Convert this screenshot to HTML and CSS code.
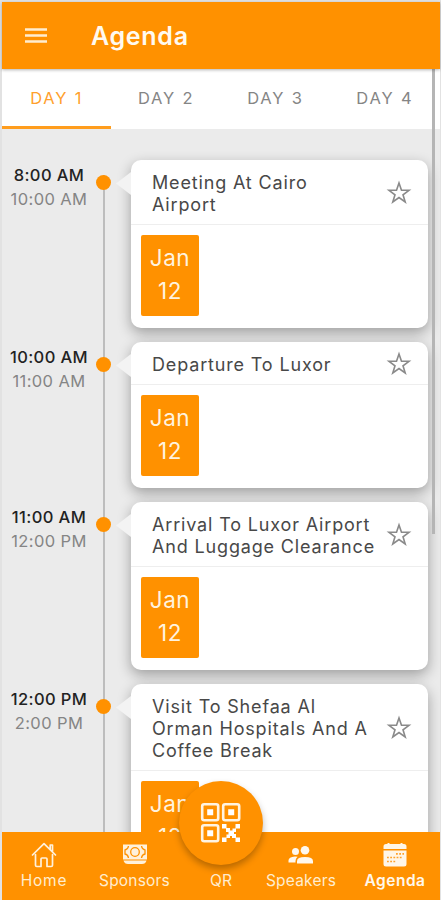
FILE: index.html
```html
<!DOCTYPE html>
<html lang="en">
<head>
<meta charset="utf-8">
<title>Agenda</title>
<link rel="stylesheet" href="styles.css">
</head>
<body>
<svg width="0" height="0" class="defs">
  <symbol id="star" viewBox="0 0 24 24"><path d="M12 2.800 14.300 9.500h6.900l-5.500 4.100 2 6.600L12 16.200l-5.700 4 2-6.600L2.800 9.500h6.900z" fill="none" stroke="#8a8a8a" stroke-width="1.500"/></symbol>
</svg>
<div class="app">
  <header class="bar">
    <svg class="menu" width="24" height="18" viewBox="0 0 24 18"><path d="M1 2.500h22M1 8.500h22M1 14.500h22" stroke="#ffedcf" stroke-width="2.600"/></svg>
    <h1>Agenda</h1>
  </header>
  <nav class="tabs">
    <a class="tab active">DAY 1</a><a class="tab">DAY 2</a><a class="tab">DAY 3</a><a class="tab">DAY 4</a>
  </nav>
  <main class="list">
    <section class="row">
      <div class="times"><b>8:00 AM</b><span>10:00 AM</span></div>
      <div class="rail"><i class="dot"></i></div>
      <article class="card">
        <div class="head"><h2>Meeting At Cairo<br>Airport</h2><svg class="star"><use href="#star"/></svg></div>
        <div class="body"><div class="date"><span>Jan</span><span>12</span></div></div>
      </article>
    </section>
    <section class="row">
      <div class="times"><b>10:00 AM</b><span>11:00 AM</span></div>
      <div class="rail"><i class="dot"></i></div>
      <article class="card">
        <div class="head"><h2>Departure To Luxor</h2><svg class="star"><use href="#star"/></svg></div>
        <div class="body"><div class="date"><span>Jan</span><span>12</span></div></div>
      </article>
    </section>
    <section class="row">
      <div class="times"><b>11:00 AM</b><span>12:00 PM</span></div>
      <div class="rail"><i class="dot"></i></div>
      <article class="card">
        <div class="head"><h2>Arrival To Luxor Airport<br>And Luggage Clearance</h2><svg class="star"><use href="#star"/></svg></div>
        <div class="body"><div class="date"><span>Jan</span><span>12</span></div></div>
      </article>
    </section>
    <section class="row">
      <div class="times"><b>12:00 PM</b><span>2:00 PM</span></div>
      <div class="rail"><i class="dot"></i></div>
      <article class="card">
        <div class="head"><h2>Visit To Shefaa Al<br>Orman Hospitals And A<br>Coffee Break</h2><svg class="star"><use href="#star"/></svg></div>
        <div class="body"><div class="date"><span>Jan</span><span>12</span></div></div>
      </article>
    </section>
  </main>
  <div class="scroll"></div>
  <nav class="bottom">
    <a class="item home"><svg width="26" height="26" viewBox="0 0 26 26" fill="none" stroke="#fff1dc" stroke-width="1.700" stroke-linejoin="round" stroke-linecap="round"><path d="M4.500 12.500V23.200q0 1.300 1.300 1.300h4.200v-7.500q0-1 1-1h4q1 0 1 1v7.500h4.200q1.300 0 1.300-1.300V12.500M1.500 13 13 1.600 24.500 13M19.200 7.500V3h2.300v6.800"/></svg><span>Home</span></a>
    <a class="item sponsors"><svg width="26" height="26" viewBox="0 0 26 26"><path d="M1 2.500h24v15H1z" fill="#fff1dc"/><path d="M1.500 18.500q1 3.500 4.500 3.500h14q3.500 0 4.500-3.500z" fill="#fff1dc"/><g fill="none" stroke="#ff9100" stroke-width="1.300"><circle cx="13" cy="10" r="4.300"/><path d="M6.500 4Q6 7.500 3 8v4q3 .5 3.500 4M19.500 4q.5 3.500 3.500 4v4q-3 .5-3.500 4"/></g></svg><span>Sponsors</span></a>
    <a class="item qr"><span>QR</span></a>
    <a class="item speakers"><svg width="26" height="26" viewBox="0 0 26 26" fill="#fff8ee"><circle cx="7.500" cy="9.500" r="3.500"/><circle cx="17" cy="8.200" r="4.300"/><path d="M.5 20.500v-2q0-3.500 6.500-4 1.500 0 2.500.3Q7.500 16.500 7.500 19v1.500zM9 21.500v-2.300q0-4.200 8-4.200t8 4.200v2.300z"/></svg><span>Speakers</span></a>
    <a class="item agenda"><svg width="26" height="26" viewBox="0 0 26 26"><path d="M5.500 2V1h2v1h11V1h2v1H22q2.500 0 2.500 2.500V7h-23V4.500Q1.500 2 4 2zM1.500 8.500h23V22q0 2.500-2.500 2.500H4Q1.500 24.500 1.500 22z" fill="#fff6e8"/><path d="M14 11.800h1.800m1.400 0H19m1.400 0H22M5 15.500h1.800m1.400 0H10m1.400 0h1.800m1.400 0h1.800m1.400 0h1.800M5 19.500h1.800m1.400 0H10m1.400 0h1.800" stroke="#ffa22b" stroke-width="1.700"/></svg><span>Agenda</span></a>
  </nav>
  <a class="fab"><svg width="42" height="42" viewBox="0 0 42 42"><g fill="none" stroke="#fff4e2" stroke-width="2.600"><rect x="2.200" y="2.200" width="16" height="16" rx="2"/><rect x="23.200" y="2.200" width="16" height="16" rx="2"/><rect x="2.200" y="23.200" width="16" height="16" rx="2"/></g><path d="M7.200 7.200h6v6h-6zM28.200 7.200h6v6h-6zM7.200 28.200h6v6h-6zM22 22h4.500v4.500H22zM35.500 22H40v4.500h-4.500zM28.500 28.500h5.500V34h-5.500zM26 26h4v4h-4zM32.500 26.500h3.500V30h-3.500zM26.500 32.500H30V36h-3.500zM32 32h4v4h-4zM22 35.500h4.500V40H22zM35.500 35.500H40V40h-4.500z" fill="#fff"/></svg></a>
</div>
</body>
</html>
```
FILE: styles.css
```css
* { box-sizing: border-box; }
body { margin: 0; background: #e2e2e2; font-family: Inter, "Liberation Sans", sans-serif; overflow: hidden; }
.defs { position: absolute; }
.app { position: relative; display: flex; flex-direction: column; height: 900px; padding: 2px 1px 0 2px; overflow: hidden; }
.bar { flex: none; height: 67px; background: #ff9100; display: flex; align-items: center; padding-left: 22px; box-shadow: 0 1px 3px rgba(0,0,0,.3); z-index: 2; }
.bar h1 { margin: 0 0 0 43px; font-size: 25px; font-weight: 600; line-height: 30px; color: #fffaf0; letter-spacing: .7px; }
.tabs { flex: none; display: flex; height: 60px; background: #fff; }
.tab { width: 109.400px; text-align: center; font-size: 16.500px; line-height: 58px; color: #858585; letter-spacing: 1.800px; border-bottom: 3px solid transparent; }
.tab.active { color: #ffa02c; border-bottom-color: #ff9d1d; }
.list { flex: 1; min-height: 0; overflow: hidden; background: #ebebeb; padding-top: 31px; }
.row { display: flex; padding-bottom: 14px; }
.times { width: 94px; padding-top: 3px; display: flex; flex-direction: column; align-items: center; font-size: 16.500px; line-height: 24px; color: #858585; letter-spacing: .4px; }
.times b { color: #222; font-weight: 500; }
.rail { width: 16px; margin-bottom: -36px; margin-top: 15px; background: linear-gradient(#bdbdbd, #bdbdbd) center top / 2px 100% no-repeat; }
.dot { display: block; width: 15px; height: 15px; border-radius: 50%; background: #ff9100; }
.card { position: relative; width: 297px; margin-left: 19px; background: #fff; border-radius: 10px; box-shadow: 0 5px 14px rgba(0,0,0,.33); }
.card::before { content: ""; position: absolute; left: -15px; top: 12px; width: 15px; height: 23px; background: #f3f3f3; clip-path: polygon(0 50%, 100% 0, 100% 100%); }
.head { display: flex; justify-content: space-between; align-items: center; padding: 11.500px 16px 8.500px 21px; border-bottom: 1px solid #eee; }
.head h2 { margin: 0; font-size: 18px; font-weight: 400; line-height: 22px; color: #484848; letter-spacing: .84px; white-space: nowrap; }
.star { flex: none; width: 26px; height: 26px; margin: -3px 0 -2px; }
.body { padding: 10px 10px 12px; }
.date { width: 58px; height: 81px; border-radius: 2px; background: #ff9100; color: #fff3df; display: flex; flex-direction: column; align-items: center; padding-top: 7px; font-size: 22.500px; line-height: 32.500px; letter-spacing: .5px; }
.scroll { position: absolute; left: 432px; top: 69px; width: 3px; height: 465px; background: #b5b5b5; }
.bottom { flex: none; height: 68px; background: #ff9100; display: flex; z-index: 1; padding-top: 10px; }
.item { display: flex; flex-direction: column; align-items: center; width: 84px; font-size: 15.500px; line-height: 20px; color: #ffedcf; letter-spacing: .2px; }
.item svg { margin-bottom: 3px; }
.home { width: 84px; letter-spacing: .8px; }
.sponsors { width: 97px; }
.qr { width: 76px; padding-top: 29px; }
.speakers { width: 84px; }
.item.agenda { width: 90px; margin-left: 7px; font-weight: 600; color: #fff8ec; letter-spacing: .5px; }
.fab { position: absolute; left: 179px; top: 781px; width: 84px; height: 84px; border-radius: 50%; background: #ff9100; z-index: 3; display: flex; align-items: center; justify-content: center; box-shadow: 0 4px 7px rgba(0,0,0,.28); }
```
